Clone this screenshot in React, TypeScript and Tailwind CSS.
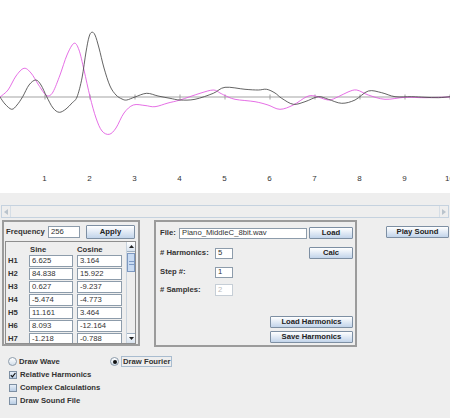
import React from 'react';

type P = [number, number];

const blackPts: P[] = [
  [0, 97], [5, 104], [11.7, 109.3], [17, 105], [22.7, 96.7], [29, 85], [35.7, 80], [41, 85], [46.7, 96.7],
  [53, 108], [59.3, 112.3], [66, 109], [72, 103], [77, 97], [82, 78], [86, 52], [89, 37], [91.7, 32.3],
  [95, 35], [99, 48], [104, 68], [110, 86], [116, 95], [122, 99], [126.7, 100], [135, 97], [146.7, 93.3],
  [158, 96], [170, 98.3], [180, 100], [195, 99.3], [213.3, 93.3], [225, 87.3], [245, 89.3], [258.3, 90],
  [266.7, 89.3], [275, 93], [281.7, 98.3], [293.3, 104.3], [305, 101.7], [318.3, 96.7], [328.3, 99.3],
  [341.7, 103.3], [355, 100], [368.3, 91], [381.7, 92.7], [395, 96.7], [411.7, 96.7], [425, 97.3],
  [438.3, 97.7], [450, 96.7],
];

const magentaPts: P[] = [
  [0, 97], [8, 90], [16, 76], [24, 68.3], [31, 73], [38, 84], [44, 93], [48, 96], [53, 92], [60, 75],
  [67, 55], [74, 43.3], [79, 50], [84, 70], [90, 96.7], [96, 118], [102, 131], [109.3, 134.3], [116, 128],
  [124, 113], [133.3, 105], [145, 105.5], [155, 106.7], [168, 103], [180, 100], [200, 93.3], [213.3, 90],
  [220, 93], [225, 95.5], [235, 99.3], [255, 101.7], [268, 105], [280, 109.3], [293.3, 105], [306.7, 96.7],
  [315, 96], [328.3, 100], [338.3, 96.7], [348, 92], [356.7, 90], [368.3, 95], [385, 99.3], [405, 97.3],
  [425, 97.7], [450, 97],
];

function smooth(pts: P[]): string {
  let d = `M${pts[0][0]},${pts[0][1]}`;
  for (let i = 0; i < pts.length - 1; i++) {
    const p0 = pts[i - 1] || pts[i];
    const p1 = pts[i];
    const p2 = pts[i + 1];
    const p3 = pts[i + 2] || p2;
    const c1x = p1[0] + (p2[0] - p0[0]) / 6;
    const c1y = p1[1] + (p2[1] - p0[1]) / 6;
    const c2x = p2[0] - (p3[0] - p1[0]) / 6;
    const c2y = p2[1] - (p3[1] - p1[1]) / 6;
    d += ` C${c1x.toFixed(2)},${c1y.toFixed(2)} ${c2x.toFixed(2)},${c2y.toFixed(2)} ${p2[0]},${p2[1]}`;
  }
  return d;
}

function Chart() {
  const ticks = [1, 2, 3, 4, 5, 6, 7, 8, 9, 10];
  return (
    <div className="h-[193px] bg-white">
      <svg width="450" height="193" viewBox="0 0 450 193">
        <line x1="0" y1="97" x2="450" y2="97" stroke="#999" strokeWidth="0.9" />
        {ticks.map((t) => (
          <line key={t} x1={45 * t} y1="94.5" x2={45 * t} y2="99.5" stroke="#999" strokeWidth="0.9" />
        ))}
        <path d={smooth(magentaPts)} fill="none" stroke="#e055e0" strokeWidth="0.85" />
        <path d={smooth(blackPts)} fill="none" stroke="#484848" strokeWidth="0.85" />
        {ticks.map((t) => (
          <text
            key={t}
            x={45 * t - 0.5}
            y="181"
            textAnchor="middle"
            fontSize="8"
            fill="#333"
            fontFamily="'Liberation Sans', Arial, sans-serif"
          >
            {t}
          </text>
        ))}
      </svg>
    </div>
  );
}

function Btn({ children, className = '' }: { children: React.ReactNode; className?: string }) {
  return (
    <div
      className={`flex items-center justify-center border border-[#7d8fa3] rounded-[1px] bg-linear-to-b from-[#ffffff] to-[#c2d4ea] text-[#222] font-bold text-[7.7px] leading-none ${className}`}
    >
      {children}
    </div>
  );
}

function Field({ value, className = '', disabled = false }: { value: string; className?: string; disabled?: boolean }) {
  return (
    <div
      className={`bg-white border flex items-center pl-[2px] text-[7.7px] leading-none overflow-hidden whitespace-nowrap ${
        disabled ? 'text-[#bcbcbc] border-[#c6ced6]' : 'text-[#333] border-[#8d9cab]'
      } ${className}`}
    >
      {value}
    </div>
  );
}

function HScroll() {
  return (
    <div className="mt-[12px] mx-[1px] h-[13px] border border-[#c5d2df] bg-[#eeeeee] flex">
      <div className="w-[9px] border-r border-[#d6dee6] flex items-center justify-center">
        <svg width="4" height="6" viewBox="0 0 4 6">
          <path d="M4 0 L0 3 L4 6 Z" fill="#b9c3cc" />
        </svg>
      </div>
      <div className="flex-1" />
      <div className="w-[9px] border-l border-[#d6dee6] flex items-center justify-center">
        <svg width="4" height="6" viewBox="0 0 4 6">
          <path d="M0 0 L4 3 L0 6 Z" fill="#b9c3cc" />
        </svg>
      </div>
    </div>
  );
}

function VScroll() {
  return (
    <div className="w-[9px] flex flex-col border-l border-[#c9d3dd] bg-[#eeeeee]">
      <div className="h-[10px] border-b border-[#9fb0c2] bg-linear-to-b from-white to-[#d8e3ef] flex items-center justify-center">
        <svg width="5" height="3" viewBox="0 0 5 3">
          <path d="M0 3 L2.5 0 L5 3 Z" fill="#222" />
        </svg>
      </div>
      <div className="h-[1px]" />
      <div className="h-[19px] border border-[#7d98c0] bg-[#c9dbf2] flex flex-col items-center justify-center gap-[2px]">
        <div className="w-[5px] h-[1px] bg-[#7f9cc6]" />
        <div className="w-[5px] h-[1px] bg-[#7f9cc6]" />
      </div>
      <div className="flex-1" />
      <div className="h-[10px] border-t border-[#9fb0c2] bg-linear-to-b from-white to-[#d8e3ef] flex items-center justify-center">
        <svg width="5" height="3" viewBox="0 0 5 3">
          <path d="M0 0 L2.5 3 L5 0 Z" fill="#222" />
        </svg>
      </div>
    </div>
  );
}

const rows: [string, string, string][] = [
  ['H1', '6.625', '3.164'],
  ['H2', '84.838', '15.922'],
  ['H3', '0.627', '-9.237'],
  ['H4', '-5.474', '-4.773'],
  ['H5', '11.161', '3.464'],
  ['H6', '8.093', '-12.164'],
  ['H7', '-1.218', '-0.788'],
];

function LeftPanel() {
  return (
    <div className="ml-[2px] w-[138px] h-[126px] border-2 border-[#9b9b9b] flex flex-col">
      <div className="mt-[3px] h-[14px] flex items-center pl-[2px]">
        <div className="w-[42px] font-bold text-[7.7px] text-[#333] leading-none">Frequency</div>
        <Field value="256" className="w-[32px] h-[12px]" />
        <Btn className="ml-[6px] w-[49px] h-[14px]">Apply</Btn>
      </div>
      <div className="mt-[2px] ml-[1px] w-[131px] h-[103px] border border-[#8e8e8e] flex overflow-hidden">
        <div className="w-[121px] flex flex-col overflow-hidden">
          <div className="h-[13px] shrink-0 flex items-end pb-[1px] font-bold text-[7.7px] text-[#333] leading-none">
            <div className="w-[23px]" />
            <div className="w-[48px] pl-[1px]">Sine</div>
            <div className="w-[45px]">Cosine</div>
          </div>
          {rows.map(([h, s, c]) => (
            <div key={h} className="h-[13px] shrink-0 flex items-start">
              <div className="w-[23px] h-[12px] pl-[2px] flex items-center font-bold text-[7.7px] text-[#333] leading-none">
                {h}
              </div>
              <Field value={s} className="w-[44px] h-[12px]" />
              <Field value={c} className="ml-[4px] w-[45px] h-[12px]" />
            </div>
          ))}
        </div>
        <div className="w-[0px] flex-1" />
        <VScroll />
      </div>
    </div>
  );
}

function Label({ children, className = '' }: { children: React.ReactNode; className?: string }) {
  return <div className={`font-bold text-[7.7px] text-[#333] leading-none whitespace-nowrap ${className}`}>{children}</div>;
}

function MiddlePanel() {
  return (
    <div className="ml-[14px] w-[203px] h-[127px] border-2 border-[#9b9b9b] flex flex-col pl-[4px] pr-[2px]">
      <div className="mt-[5px] h-[12px] flex items-center">
        <Label className="w-[19px]">File:</Label>
        <Field value="Piano_MiddleC_8bit.wav" className="w-[128px] h-[11px]" />
        <Btn className="ml-[2px] w-[44px] h-[12px]">Load</Btn>
      </div>
      <div className="mt-[8px] h-[12px] flex items-center">
        <Label className="w-[55px]">#&nbsp;Harmonics:</Label>
        <Field value="5" className="w-[18px] h-[11px]" />
        <div className="flex-1" />
        <Btn className="w-[44px] h-[12px]">Calc</Btn>
      </div>
      <div className="mt-[7px] h-[12px] flex items-center">
        <Label className="w-[55px]">Step #:</Label>
        <Field value="1" className="w-[18px] h-[11px]" />
      </div>
      <div className="mt-[6px] h-[12px] flex items-center">
        <Label className="w-[55px]">#&nbsp;Samples:</Label>
        <Field value="2" disabled className="w-[18px] h-[12px]" />
      </div>
      <div className="mt-[20px] flex flex-col items-end gap-[3px]">
        <Btn className="w-[83px] h-[12px]">Load Harmonics</Btn>
        <Btn className="w-[83px] h-[12px]">Save Harmonics</Btn>
      </div>
    </div>
  );
}

function Radio({ checked }: { checked?: boolean }) {
  return (
    <div className="w-[9px] h-[9px] rounded-full border border-[#8d9cab] bg-linear-to-b from-white to-[#d3dfeb] flex items-center justify-center shrink-0">
      {checked && <div className="w-[4px] h-[4px] rounded-full bg-[#111]" />}
    </div>
  );
}

function Check({ checked }: { checked?: boolean }) {
  return (
    <div className="w-[8px] h-[8px] border border-[#7d8fa3] bg-linear-to-b from-[#e6eef7] to-[#b9cde4] flex items-center justify-center shrink-0">
      {checked && (
        <svg width="6" height="6" viewBox="0 0 6 6">
          <path d="M0.8 3.2 L2.4 4.8 L5.4 1" fill="none" stroke="#111" strokeWidth="1.2" />
        </svg>
      )}
    </div>
  );
}

function Options() {
  return (
    <div className="mt-[8px] flex flex-col">
      <div className="h-[13px] flex items-center">
        <div className="ml-[8px] w-[102px] flex items-center gap-[2px]">
          <Radio />
          <Label>Draw Wave</Label>
        </div>
        <div className="flex items-center gap-[2px]">
          <Radio checked />
          <div className="border border-[#a9bccf] px-[1px] h-[11px] flex items-center">
            <Label>Draw Fourier</Label>
          </div>
        </div>
      </div>
      {[
        ['Relative Harmonics', true],
        ['Complex Calculations', false],
        ['Draw Sound File', false],
      ].map(([t, c]) => (
        <div key={t as string} className="h-[13px] flex items-center pl-[9px] gap-[3px]">
          <Check checked={c as boolean} />
          <Label>{t as string}</Label>
        </div>
      ))}
    </div>
  );
}

export default function App() {
  return (
    <div className="w-[450px] h-[418px] bg-[#eeeeee] flex flex-col overflow-hidden font-['Liberation_Sans',Arial,sans-serif]">
      <Chart />
      <HScroll />
      <div className="mt-[2px] flex items-start">
        <LeftPanel />
        <MiddlePanel />
        <Btn className="ml-[29px] mt-[6px] w-[63px] h-[12px]">Play Sound</Btn>
      </div>
      <Options />
    </div>
  );
}
